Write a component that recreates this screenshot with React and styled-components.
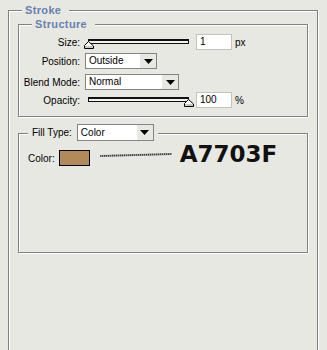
import React from 'react';
import styled, { createGlobalStyle } from 'styled-components';

const GlobalStyle = createGlobalStyle`
  html, body {
    margin: 0;
    padding: 0;
    background: #e8e8e3;
    overflow: hidden;
  }
  body {
    font-family: "Liberation Sans", Arial, sans-serif;
    font-size: 10px;
    color: #000;
  }
`;

const Page = styled.div`
  padding: 3px 9px 0 8px;
  height: 350px;
  box-sizing: border-box;
  display: flex;
  flex-direction: column;
`;

const GroupWrap = styled.div`
  display: flex;
  flex-direction: column;
  flex: ${p => (p.$fill ? 1 : 'none')};
  margin-top: ${p => p.$mt || 0}px;
`;

const GroupHeader = styled.div`
  display: flex;
  height: ${p => p.$h}px;
`;

const CornerLeft = styled.div`
  width: ${p => p.$w}px;
  margin-top: ${p => p.$line}px;
  border-top: 1px solid #808080;
  border-left: 1px solid #808080;
  box-shadow: inset 1px 1px 0 #fff;
  box-sizing: border-box;
`;

const CornerRight = styled.div`
  flex: 1;
  margin-top: ${p => p.$line}px;
  border-top: 1px solid #808080;
  border-right: 1px solid #808080;
  box-shadow: inset 0 1px 0 #fff, 1px 0 0 #fff;
  box-sizing: border-box;
`;

const Legend = styled.div`
  padding: 0 8px 0 3px;
  font-weight: bold;
  font-size: 11px;
  letter-spacing: 0.35px;
  line-height: 14px;
  color: #6680b3;
`;

const GroupBody = styled.div`
  border: 1px solid #808080;
  border-top: none;
  border-bottom: ${p => (p.$open ? 'none' : '1px solid #808080')};
  box-shadow: inset 1px 0 0 #fff, 1px ${p => (p.$open ? 0 : 1)}px 0 #fff;
  padding: ${p => p.$pad};
  height: ${p => (p.$h ? `${p.$h}px` : 'auto')};
  flex: ${p => (p.$fill ? 1 : 'none')};
  box-sizing: border-box;
`;

const Row = styled.div`
  display: flex;
  align-items: center;
  height: 16px;
  margin-top: ${p => p.$mt || 0}px;
`;

const Label = styled.div`
  width: 60px;
  text-align: right;
  margin-right: 5px;
  white-space: nowrap;
`;

const SliderBox = styled.div`
  position: relative;
  width: 108px;
  height: 16px;
`;

const Track = styled.div`
  margin: 5px 4px 0 3px;
  height: 5px;
  box-sizing: border-box;
  border: 1px solid #111;
  border-top-width: 2px;
  background: #f2f2ee;
`;

const Thumb = styled.svg`
  position: absolute;
  top: 7px;
`;

const NumInput = styled.div`
  width: 36px;
  height: 16px;
  box-sizing: border-box;
  margin-left: 3px;
  border: 1px solid #c3c3bb;
  background: #fff;
  padding-left: 3px;
  line-height: 14px;
`;

const Unit = styled.span`
  margin-left: 3px;
`;

const SelectBox = styled.div`
  display: flex;
  width: ${p => p.$w}px;
  height: ${p => p.$h || 16}px;
  box-sizing: border-box;
  border: 1px solid #848484;
  background: #fff;
`;

const SelectText = styled.div`
  flex: 1;
  padding-left: 3px;
  line-height: ${p => (p.$h || 16) - 2}px;
`;

const SelectArrow = styled.div`
  width: 16px;
  background: #e8e8e3;
  display: flex;
  align-items: center;
  justify-content: center;
`;

const FillLabel = styled.div`
  margin: 0 5px 0 4px;
  line-height: 17px;
`;

const HeaderGap = styled.div`
  width: 4px;
`;

const ColorLabel = styled.div`
  margin-right: 4px;
`;

const Swatch = styled.div`
  width: 31px;
  height: 16px;
  box-sizing: border-box;
  border: 1px solid #000;
  background: ${p => p.$color};
`;

const Pointer = styled.svg`
  margin-left: 10px;
`;

const HexNote = styled.div`
  align-self: flex-start;
  margin: -7px 0 0 8px;
  font-family: "DejaVu Sans", sans-serif;
  font-weight: bold;
  font-size: 23px;
  line-height: 23px;
  color: #111;
`;

const Group = ({ title, cornerW = 14, h = 14, line = 7, mt, fill, open, bodyPad, bodyH, children }) => (
  <GroupWrap $mt={mt} $fill={fill}>
    <GroupHeader $h={h}>
      <CornerLeft $w={cornerW} $line={line} />
      {title}
      <CornerRight $line={line} />
    </GroupHeader>
    <GroupBody $pad={bodyPad} $h={bodyH} $fill={fill} $open={open}>
      {children}
    </GroupBody>
  </GroupWrap>
);

const Slider = ({ value }) => (
  <SliderBox>
    <Track />
    <Thumb width="10" height="8" viewBox="0 0 10 8" style={{ left: 3 + value * 100 - 4.5 }}>
      <polygon points="4.5,0.5 9.5,5 9.5,7.5 0.5,7.5 0.5,4.5" fill="#fff" stroke="#000" strokeWidth="1" />
      <rect x="1" y="5" width="8" height="2" fill="#c8c8c4" />
    </Thumb>
  </SliderBox>
);

const Select = ({ w, h, value }) => (
  <SelectBox $w={w} $h={h}>
    <SelectText $h={h}>{value}</SelectText>
    <SelectArrow>
      <svg width="9" height="5" viewBox="0 0 9 5">
        <polygon points="0,0 9,0 4.5,5" fill="#000" />
      </svg>
    </SelectArrow>
  </SelectBox>
);

export default function App() {
  return (
    <>
      <GlobalStyle />
      <Page>
        <Group title={<Legend>Stroke</Legend>} fill open bodyPad="0 9px">
          <Group title={<Legend>Structure</Legend>} bodyPad="3px 0 8px 1px">
            <Row>
              <Label>Size:</Label>
              <Slider value={0} />
              <NumInput>1</NumInput>
              <Unit>px</Unit>
            </Row>
            <Row $mt={3}>
              <Label>Position:</Label>
              <Select w={72} value="Outside" />
            </Row>
            <Row $mt={5}>
              <Label>Blend Mode:</Label>
              <Select w={94} value="Normal" />
            </Row>
            <Row $mt={2}>
              <Label>Opacity:</Label>
              <Slider value={1} />
              <NumInput>100</NumInput>
              <Unit>%</Unit>
            </Row>
          </Group>

          <Group
            mt={7}
            cornerW={10}
            h={17}
            line={9}
            bodyH={112}
            bodyPad="9px 0 0 9px"
            title={
              <>
                <FillLabel>Fill Type:</FillLabel>
                <Select w={77} h={17} value="Color" />
                <HeaderGap />
              </>
            }
          >
            <Row>
              <ColorLabel>Color:</ColorLabel>
              <Swatch $color="#b18a5a" />
              <Pointer width="72" height="16" viewBox="0 0 72 16">
                <line x1="0" y1="6" x2="72" y2="4" stroke="#9a9a96" strokeWidth="2.2" />
                <line x1="0" y1="6" x2="72" y2="4" stroke="#3c3c3c" strokeWidth="1.6" strokeDasharray="1 1" />
              </Pointer>
              <HexNote>A7703F</HexNote>
            </Row>
          </Group>
        </Group>
      </Page>
    </>
  );
}
